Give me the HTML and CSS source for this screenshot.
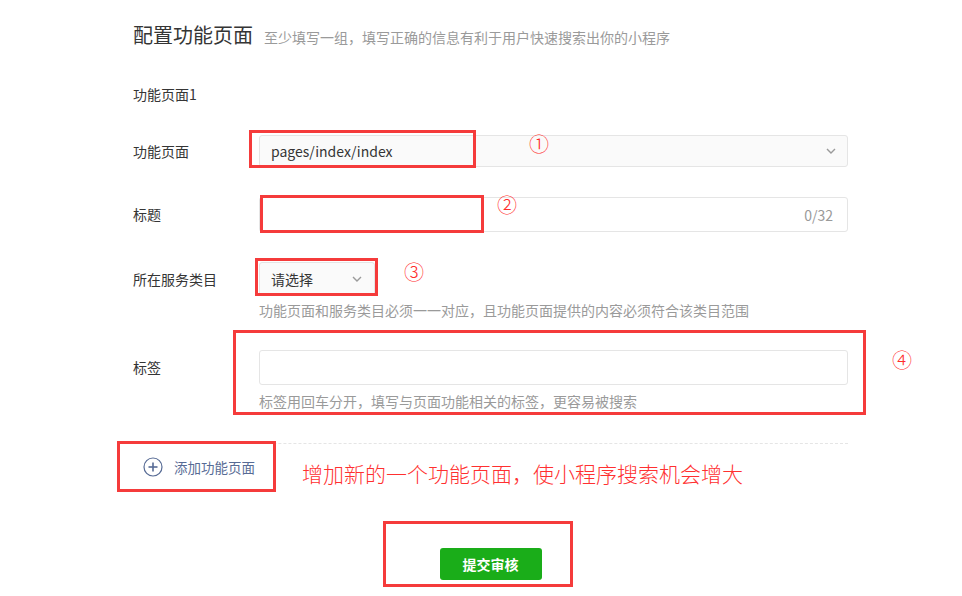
FILE: index.html
```html
<!DOCTYPE html>
<html lang="zh-CN">
<head>
    <meta charset="UTF-8">
    <title>配置功能页面</title>
    <link rel="stylesheet" href="styles.css">
</head>
<body>

<div class="page">
    <div class="page-title">
        <h2>配置功能页面</h2>
        <span class="page-tips">至少填写一组，填写正确的信息有利于用户快速搜索出你的小程序</span>
    </div>

    <div class="form-group">
        <h3 class="group-title">功能页面1</h3>

        <div class="form-row">
            <label class="form-label label-32">功能页面</label>
            <div class="form-control">
                <div class="select select-full">
                    <span>pages/index/index</span>
                    <svg class="arrow" width="10" height="6" viewBox="0 0 10 6"><polyline points="1,1 5,5 9,1" fill="none" stroke="#9a9a9a" stroke-width="1.4"/></svg>
                </div>
            </div>
        </div>

        <div class="form-row">
            <label class="form-label label-35">标题</label>
            <div class="form-control">
                <div class="input">
                    <span class="counter">0/32</span>
                </div>
            </div>
        </div>

        <div class="form-row">
            <label class="form-label label-34">所在服务类目</label>
            <div class="form-control">
                <div class="select select-small">
                    <span>请选择</span>
                    <svg class="arrow" width="10" height="6" viewBox="0 0 10 6"><polyline points="1,1 5,5 9,1" fill="none" stroke="#9a9a9a" stroke-width="1.4"/></svg>
                </div>
                <p class="form-tips">功能页面和服务类目必须一一对应，且功能页面提供的内容必须符合该类目范围</p>
            </div>
        </div>

        <div class="form-row">
            <label class="form-label label-35">标签</label>
            <div class="form-control">
                <div class="input"></div>
                <p class="form-tips tips-low">标签用回车分开，填写与页面功能相关的标签，更容易被搜索</p>
            </div>
        </div>
    </div>

    <div class="add-row">
        <a class="add-link" href="#">
            <svg width="20" height="20" viewBox="0 0 20 20">
                <circle cx="10" cy="10" r="9" fill="none" stroke="#576b95" stroke-width="1.2"/>
                <line x1="10" y1="5.5" x2="10" y2="14.5" stroke="#576b95" stroke-width="1.6"/>
                <line x1="5.5" y1="10" x2="14.5" y2="10" stroke="#576b95" stroke-width="1.6"/>
            </svg>
            添加功能页面
        </a>
    </div>

    <div class="submit-row">
        <button class="btn-primary">提交审核</button>
    </div>
</div>

<!-- annotation marks drawn over the screenshot -->
<div class="mark box-1"></div>
<div class="mark box-2"></div>
<div class="mark box-3"></div>
<div class="mark box-4"></div>
<div class="mark box-5"></div>
<div class="mark box-6"></div>
<span class="num num-1">①</span>
<span class="num num-2">②</span>
<span class="num num-3">③</span>
<span class="num num-4">④</span>
<span class="note">增加新的一个功能页面，使小程序搜索机会增大</span>

</body>
</html>
```

FILE: styles.css
```css
body {
    position: relative;
    margin: 0;
    padding: 0;
    background-color: #fff;
    font-family: "Noto Sans CJK SC", "Noto Sans", sans-serif;
    font-size: 14px;
    color: #353535;
}

.page {
    width: 715px;
    padding: 20px 0 16px 133px;
}

.page-title {
    display: flex;
    align-items: baseline;
    height: 30px;
}

.page-title h2 {
    margin: 0;
    font-size: 20px;
    font-weight: normal;
    line-height: 30px;
}

.page-tips {
    margin-left: 11px;
    font-size: 14px;
    color: #9a9a9a;
}

.group-title {
    margin: 34px 0 0;
    font-size: 14px;
    font-weight: normal;
    line-height: 20px;
}

.form-row {
    display: flex;
    align-items: flex-start;
    margin-top: 31px;
}

.form-row + .form-row {
    margin-top: 30px;
}

.form-label {
    width: 126px;
    flex-shrink: 0;
}

.label-32 { line-height: 32px; }
.label-34 { line-height: 34px; }
.label-35 { line-height: 35px; }

.form-control {
    flex: 1;
}

.select {
    display: flex;
    align-items: center;
    justify-content: space-between;
    box-sizing: border-box;
    padding: 0 11px 0 11px;
    background-color: #fafafa;
    border: 1px solid #e5e5e5;
    border-radius: 3px;
}

.select-full {
    height: 32px;
}

.select-small {
    width: 116px;
    height: 34px;
    padding-right: 12px;
}

.input {
    display: flex;
    align-items: center;
    justify-content: flex-end;
    box-sizing: border-box;
    height: 35px;
    padding: 0 14px;
    border: 1px solid #e5e5e5;
    border-radius: 3px;
}

.counter {
    color: #9a9a9a;
}

.form-tips {
    margin: 4px 0 0;
    line-height: 20px;
    color: #9a9a9a;
}

.tips-low {
    margin-top: 6px;
}

.add-row {
    margin-top: 32px;
    padding: 13px 0 0 10px;
    border-top: 1px dashed #e5e5e5;
}

.add-link {
    display: flex;
    align-items: center;
    gap: 11px;
    line-height: 20px;
    font-size: 13.5px;
    color: #576b95;
    text-decoration: none;
}

.submit-row {
    display: flex;
    justify-content: center;
    margin-top: 71px;
}

.btn-primary {
    width: 102px;
    height: 32px;
    padding: 0;
    background-color: #1aad19;
    color: #fff;
    border: none;
    border-radius: 3px;
    font-family: inherit;
    font-size: 14px;
    font-weight: bold;
}

/* annotations */
.mark {
    position: absolute;
    box-sizing: border-box;
    border: 3px solid #f53b3b;
}

.box-1 { left: 249px; top: 130px; width: 227px; height: 38px; }
.box-2 { left: 260px; top: 195px; width: 224px; height: 38px; }
.box-3 { left: 255px; top: 258px; width: 123px; height: 38px; }
.box-4 { left: 233px; top: 330px; width: 633px; height: 85px; }
.box-5 { left: 117px; top: 441px; width: 159px; height: 51px; }
.box-6 { left: 383px; top: 521px; width: 190px; height: 66px; }

.num {
    position: absolute;
    font-size: 20px;
    line-height: 20px;
    color: #ff2b2b;
    font-weight: 300;
}

.num-1 { left: 529px; top: 134px; }
.num-2 { left: 497px; top: 195px; }
.num-3 { left: 404px; top: 262px; }
.num-4 { left: 892px; top: 350px; }

.note {
    position: absolute;
    left: 302px;
    top: 460px;
    font-size: 21px;
    line-height: 26px;
    color: #ff3030;
    font-weight: 300;
}
```
